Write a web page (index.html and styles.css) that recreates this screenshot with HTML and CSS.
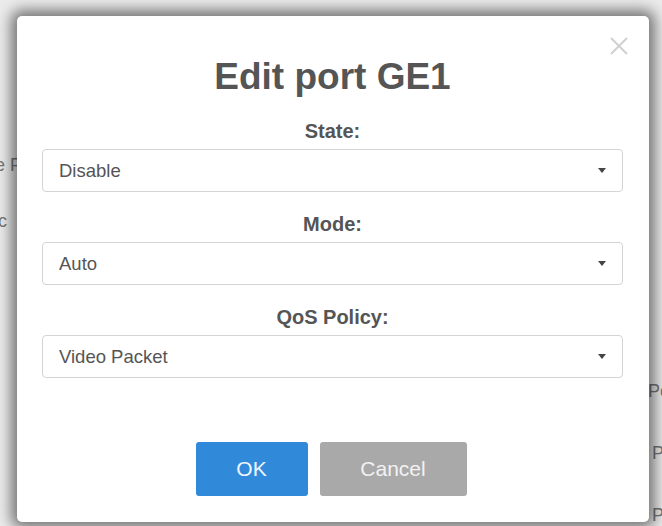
FILE: index.html
```html
<!DOCTYPE html>
<html lang="en">
<head>
    <meta charset="UTF-8">
    <meta name="viewport" content="width=device-width, initial-scale=1.0">
    <title>Edit port GE1</title>
    <link rel="stylesheet" href="styles.css">
</head>
<body>
    <div class="page">
        <div class="row row--first"><span class="cell-left">Type F</span><span class="cell-right"></span></div>
        <div class="row"><span class="cell-left">Desc</span><span class="cell-right"></span></div>
        <div class="row row--tall"><span class="cell-left"></span><span class="cell-right">Pol</span></div>
        <div class="row"><span class="cell-left"></span><span class="cell-right">Pa</span></div>
        <div class="row"><span class="cell-left"></span><span class="cell-right">Pa</span></div>
    </div>

    <div class="overlay">
        <div class="modal">
            <svg class="close" width="20" height="20" viewBox="0 0 20 20">
                <path d="M2 2 L18 18 M18 2 L2 18" stroke="#d0d0d0" stroke-width="2" fill="none"/>
            </svg>
            <h3 class="modal-title">Edit port GE1</h3>

            <label class="field-label">State:</label>
            <div class="select"><span>Disable</span><i class="caret"></i></div>

            <label class="field-label">Mode:</label>
            <div class="select"><span>Auto</span><i class="caret"></i></div>

            <label class="field-label">QoS Policy:</label>
            <div class="select"><span>Video Packet</span><i class="caret"></i></div>

            <div class="buttoncontainer">
                <button class="btn btn--ok">OK</button>
                <button class="btn btn--cancel">Cancel</button>
            </div>
        </div>
    </div>
</body>
</html>
```

FILE: styles.css
```css
body {
    width: 662px;
    height: 526px;
    margin: 0;
    padding: 0;
    overflow: hidden;
    position: relative;
    background: #ebebeb;
    font-family: "Liberation Sans", Arial, sans-serif;
    color: #555;
}
.page {
    padding-top: 140px;
}
.row {
    height: 62px;
    display: flex;
    justify-content: space-between;
    align-items: center;
    font-size: 18px;
    color: #777;
}
.row--first {
    height: 50px;
}
.row--tall {
    height: 170px;
    align-items: flex-end;
    padding-bottom: 20px;
    box-sizing: border-box;
}
.cell-left {
    margin-left: -34px;
}
.cell-right {
    margin-right: -12px;
}
.overlay {
    position: absolute;
    left: 17px;
    top: 16px;
}
.modal {
    position: relative;
    width: 632px;
    height: 506px;
    box-sizing: border-box;
    padding: 39px 26px 26px 25px;
    background: #fff;
    border-radius: 5px;
    box-shadow: 0 0 14px 6px rgba(0, 0, 0, 0.5);
    display: flex;
    flex-direction: column;
}
.close {
    position: absolute;
    right: 20px;
    top: 20px;
}
.modal-title {
    margin: 0;
    text-align: center;
    font-size: 37px;
    line-height: 44px;
    font-weight: bold;
    color: #555;
}
.field-label {
    display: block;
    margin-top: 20px;
    text-align: center;
    font-size: 20px;
    line-height: 24px;
    font-weight: bold;
    color: #555;
}
.select {
    margin-top: 6px;
    height: 43px;
    box-sizing: border-box;
    border: 1px solid #d4d4d4;
    border-radius: 4px;
    padding: 0 16px;
    display: flex;
    align-items: center;
    justify-content: space-between;
    font-size: 18.5px;
    color: #555;
}
.caret {
    width: 0;
    height: 0;
    border-left: 4px solid transparent;
    border-right: 4px solid transparent;
    border-top: 5px solid #444;
}
.buttoncontainer {
    margin-top: auto;
    display: flex;
    justify-content: center;
    gap: 12px;
    padding-right: 3px;
}
.btn {
    height: 54px;
    border: none;
    border-radius: 3px;
    font-family: "Liberation Sans", Arial, sans-serif;
    font-size: 21px;
    color: #fff;
}
.btn--ok {
    width: 112px;
    background: #318ad9;
    color: #eef5ff;
}
.btn--cancel {
    width: 147px;
    background: #a9a9a9;
    color: #f2f2f2;
}
```
